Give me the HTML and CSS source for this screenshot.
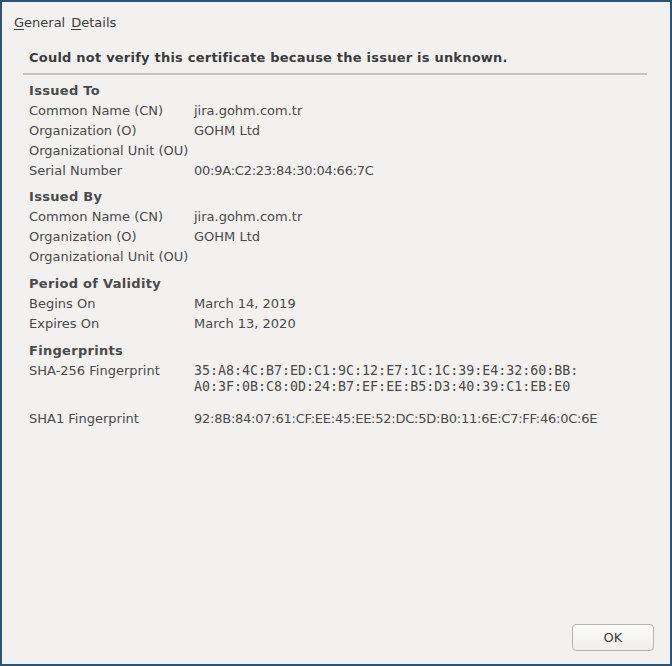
FILE: index.html
```html
<!DOCTYPE html>
<html>
<head>
<meta charset="utf-8">
<link rel="stylesheet" href="styles.css">
</head>
<body>
<div class="window">
  <div class="tabs">
    <span class="tab"><u>G</u>eneral</span>
    <span class="tab"><u>D</u>etails</span>
  </div>
  <div class="content">
    <div class="warning">Could not verify this certificate because the issuer is unknown.</div>
    <div class="sep"></div>
    <div class="section s1">
      <div class="head">Issued To</div>
      <div class="row"><span class="label">Common Name (CN)</span><span class="value">jira.gohm.com.tr</span></div>
      <div class="row"><span class="label">Organization (O)</span><span class="value">GOHM Ltd</span></div>
      <div class="row"><span class="label">Organizational Unit (OU)</span><span class="value"></span></div>
      <div class="row"><span class="label">Serial Number</span><span class="value hex">00:9A:C2:23:84:30:04:66:7C</span></div>
    </div>
    <div class="section s2">
      <div class="head">Issued By</div>
      <div class="row"><span class="label">Common Name (CN)</span><span class="value">jira.gohm.com.tr</span></div>
      <div class="row"><span class="label">Organization (O)</span><span class="value">GOHM Ltd</span></div>
      <div class="row"><span class="label">Organizational Unit (OU)</span><span class="value"></span></div>
    </div>
    <div class="section s3">
      <div class="head">Period of Validity</div>
      <div class="row"><span class="label">Begins On</span><span class="value">March 14, 2019</span></div>
      <div class="row"><span class="label">Expires On</span><span class="value">March 13, 2020</span></div>
    </div>
    <div class="section s3">
      <div class="head">Fingerprints</div>
      <div class="row"><span class="label">SHA-256 Fingerprint</span><span class="value mono">35:A8:4C:B7:ED:C1:9C:12:E7:1C:1C:39:E4:32:60:BB:<br>A0:3F:0B:C8:0D:24:B7:EF:EE:B5:D3:40:39:C1:EB:E0</span></div>
      <div class="row sha1"><span class="label">SHA1 Fingerprint</span><span class="value hex">92:8B:84:07:61:CF:EE:45:EE:52:DC:5D:B0:11:6E:C7:FF:46:0C:6E</span></div>
    </div>
  </div>
  <div class="footer">
    <button class="ok">OK</button>
  </div>
</div>
</body>
</html>
```

FILE: styles.css
```css
html, body {
  margin: 0;
  padding: 0;
  background: #2a5379;
}
body {
  width: 672px;
  height: 666px;
  font-family: "DejaVu Sans", sans-serif;
  font-size: 13px;
  color: #4a4a4a;
}
.window {
  box-sizing: border-box;
  width: 672px;
  height: 666px;
  border: 2px solid #2a5379;
  background: #f2f1f0;
  display: flex;
  flex-direction: column;
}
.tabs {
  display: flex;
  gap: 6px;
  padding: 13px 0 0 12px;
  height: 21px;
  line-height: 16px;
  color: #3c3c3c;
}
.tabs u {
  text-decoration-thickness: 1px;
  text-underline-offset: 2px;
}
.content {
  flex: 1;
  padding: 0 23px 0 21px;
}
.warning {
  font-weight: bold;
  color: #3c3c3c;
  letter-spacing: 0.22px;
  padding: 14px 0 0 6px;
  line-height: 16px;
  height: 23px;
}
.sep {
  height: 2px;
  background: #c6c5c3;
}
.section {
  padding: 7px 0 0 6px;
}
.section.s1 {
  padding-top: 8px;
}
.section.s2 {
  padding-top: 6px;
}
.head {
  font-weight: bold;
  letter-spacing: 0.3px;
  line-height: 16px;
  height: 20px;
  color: #4a4a4a;
}
.row {
  display: flex;
  line-height: 16px;
  min-height: 20px;
}
.label {
  width: 165px;
  flex: none;
}
.value.hex {
  letter-spacing: -0.24px;
}
.value.mono {
  font-family: "DejaVu Sans Mono", monospace;
  font-size: 13.3px;
  line-height: 16px;
}
.sha1 {
  margin-top: 16px;
}
.footer {
  display: flex;
  justify-content: flex-end;
  padding: 0 16px 13px 0;
}
.ok {
  width: 82px;
  height: 27px;
  border: 1px solid #b6b4b1;
  border-radius: 4px;
  background: linear-gradient(#fbfbfa, #efeeed);
  font-family: "DejaVu Sans", sans-serif;
  font-size: 13px;
  color: #3c3c3c;
  padding: 0;
}
```
